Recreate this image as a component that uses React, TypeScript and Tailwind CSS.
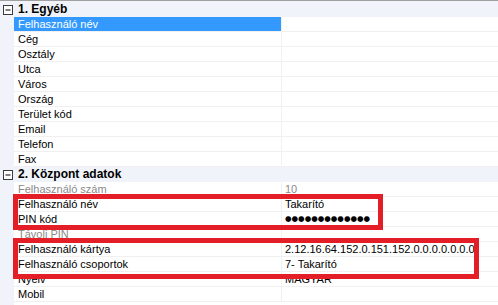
import React from 'react';

type Row = {
  label: string;
  value?: string;
  dim?: boolean;
  selected?: boolean;
  dots?: boolean;
};

const egyeb: Row[] = [
  { label: 'Felhasználó név', selected: true },
  { label: 'Cég' },
  { label: 'Osztály' },
  { label: 'Utca' },
  { label: 'Város' },
  { label: 'Ország' },
  { label: 'Terület kód' },
  { label: 'Email' },
  { label: 'Telefon' },
  { label: 'Fax' },
];

const kozpont: Row[] = [
  { label: 'Felhasználó szám', value: '10', dim: true },
  { label: 'Felhasználó név', value: 'Takarító' },
  { label: 'PIN kód', dots: true },
  { label: 'Távoli PIN', dim: true },
  { label: 'Felhasználó kártya', value: '2.12.16.64.152.0.151.152.0.0.0.0.0.0.0' },
  { label: 'Felhasználó csoportok', value: '7- Takarító' },
  { label: 'Nyelv', value: 'MAGYAR' },
  { label: 'Mobil' },
];

function Collapse() {
  return (
    <svg width="10" height="10" viewBox="0 0 10 10" className="shrink-0">
      <rect x="0.5" y="0.5" width="9" height="9" fill="white" stroke="#3c3c3c" />
      <path d="M2.5 5h5" stroke="#000" strokeWidth="1" />
    </svg>
  );
}

function Header({ title }: { title: string }) {
  return (
    <div className="flex h-[15px] items-center bg-[#f0f4fa]">
      <div className="flex w-[14px] justify-center pl-[1px]">
        <Collapse />
      </div>
      <span className="pl-[4px] text-[12px] font-bold leading-[15px] text-black">{title}</span>
    </div>
  );
}

function PropRow({ row }: { row: Row }) {
  const text = row.dim ? 'text-[#8a8a8a]' : 'text-black';
  return (
    <div className="flex h-[15px]">
      <div className="w-[14px] shrink-0 bg-[#f0f4fa]" />
      <div
        className={`flex w-[267px] shrink-0 items-center border-b border-[#f0f0f0] pl-[4px] text-[11px] leading-[14px] ${
          row.selected ? 'bg-[#3399ff] text-white' : text
        }`}
      >
        {row.label}
      </div>
      <div className="w-px shrink-0 bg-[#eef1f5]" />
      <div className={`flex flex-1 items-center border-b border-[#f0f0f0] pl-[3px] text-[11px] leading-[14px] ${text}`}>
        {row.dots ? (
          <span className="text-[7.5px] leading-[14px]" style={{ fontFamily: '"DejaVu Sans", sans-serif' }}>
            ●●●●●●●●●●●●●
          </span>
        ) : (
          row.value
        )}
      </div>
    </div>
  );
}

export default function App() {
  return (
    <div
      className="relative h-[305px] w-[498px] overflow-hidden bg-white"
      style={{ fontFamily: '"Liberation Sans", Arial, sans-serif' }}
    >
      <div className="h-px bg-[#a0a0a0]" />
      <div className="h-px bg-[#f0f4fa]" />
      <Header title="1. Egyéb" />
      {egyeb.map((r, i) => (
        <PropRow key={i} row={r} />
      ))}
      <Header title="2. Központ adatok" />
      {kozpont.map((r, i) => (
        <PropRow key={i} row={r} />
      ))}
      <div className="flex h-full">
        <div className="w-[14px] bg-[#f0f4fa]" />
      </div>

      {/* kiemelések */}
      <div className="absolute left-[13px] top-[194px] h-[36px] w-[370px] border-[5px] border-[#e31e26]" />
      <div className="absolute left-[13px] top-[238px] h-[41px] w-[466px] border-[5px] border-[#e31e26]" />
    </div>
  );
}
